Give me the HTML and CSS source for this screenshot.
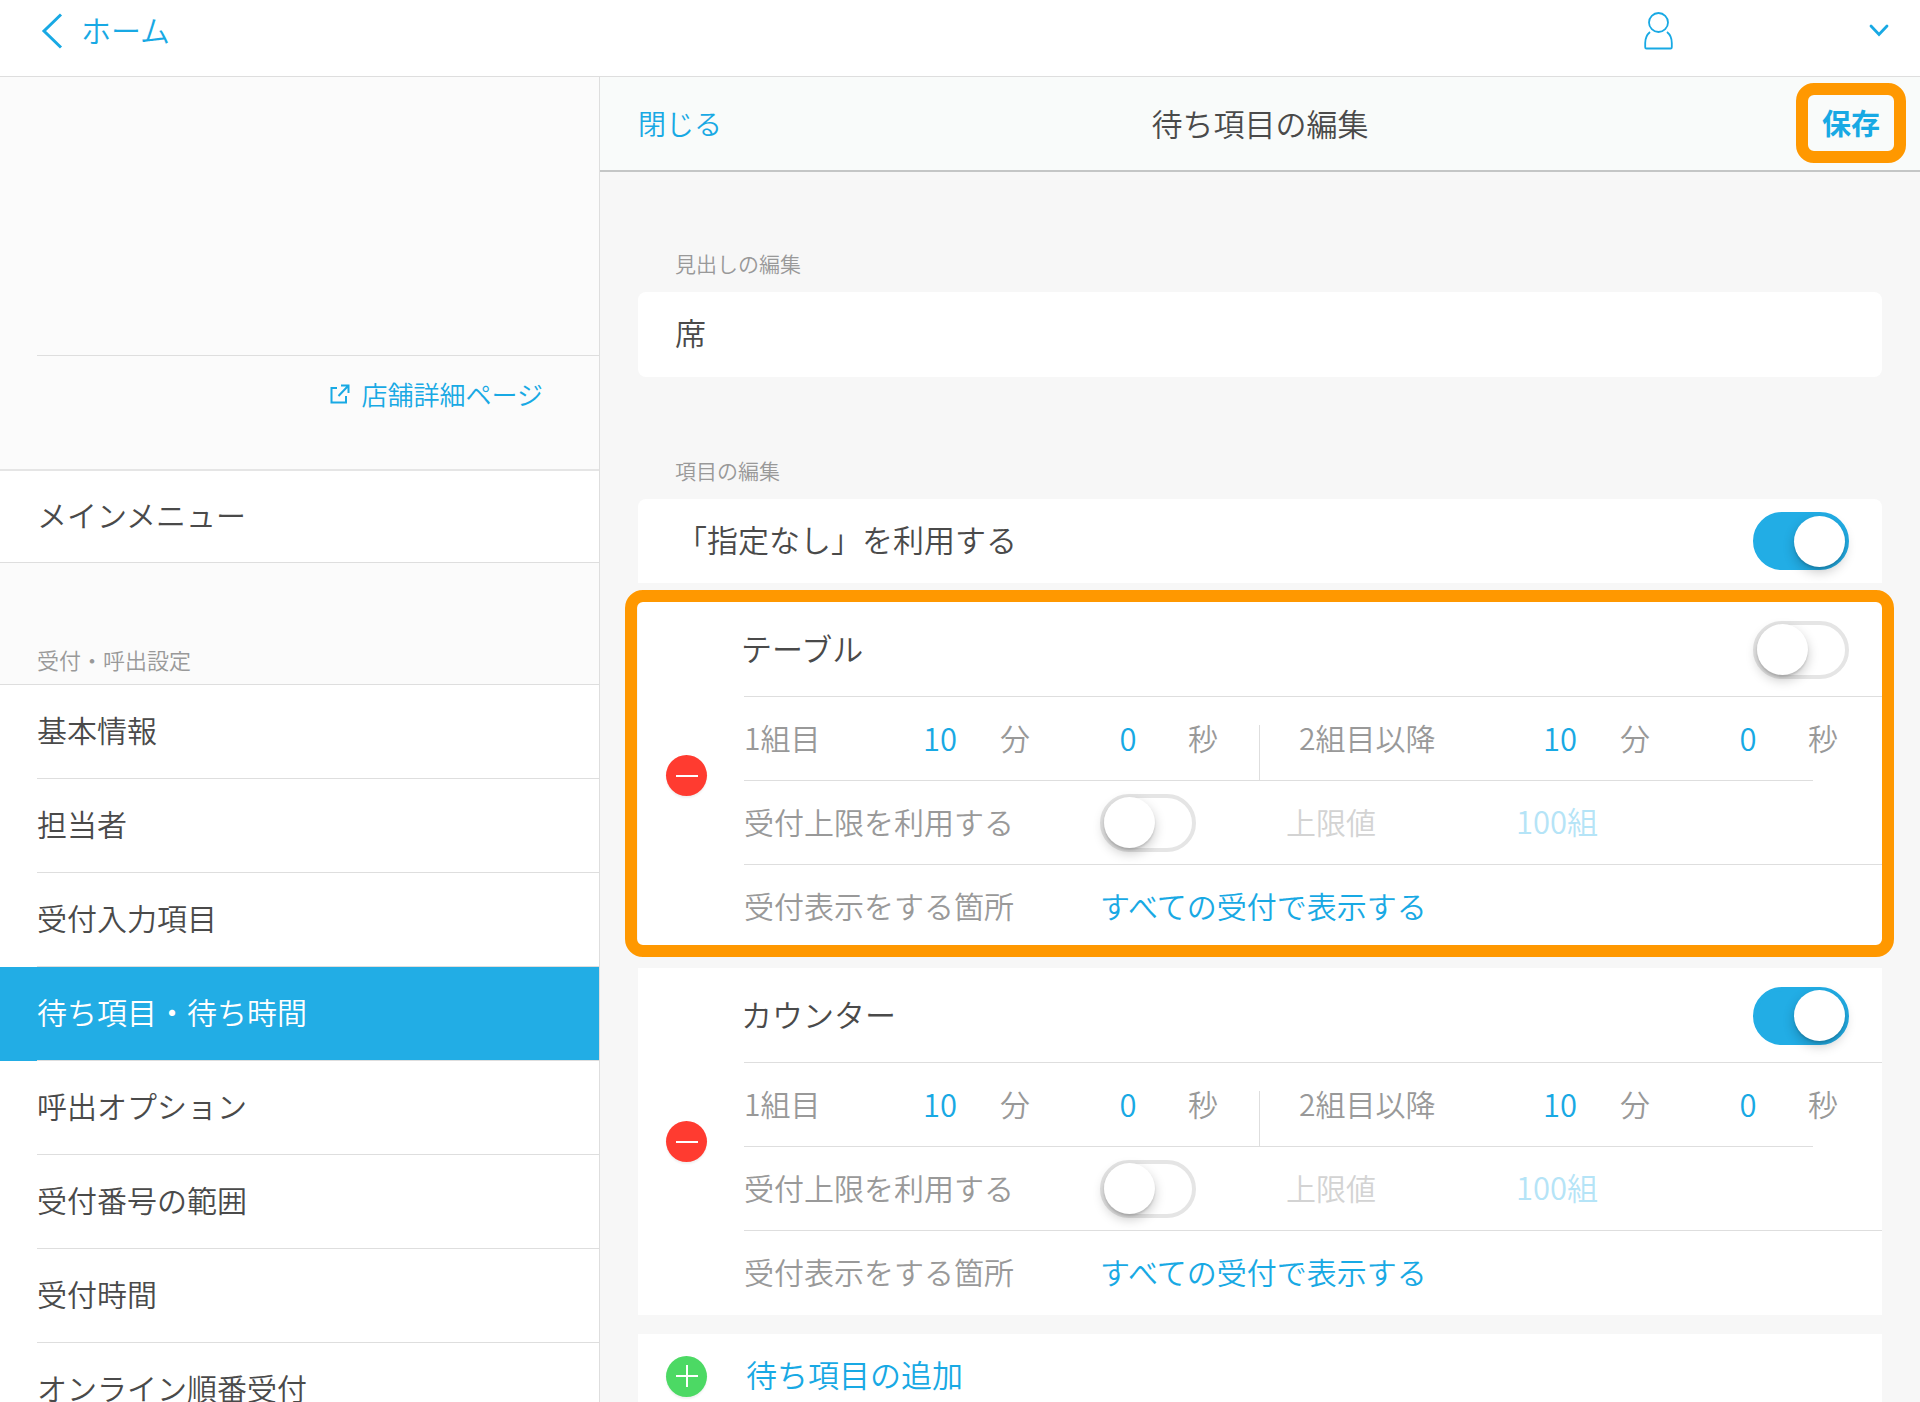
FILE: index.html
```html
<!DOCTYPE html>
<html lang="ja">
<head>
    <meta charset="UTF-8">
    <meta name="viewport" content="width=device-width, initial-scale=1.0">
    <title>待ち項目の編集</title>
    <link rel="stylesheet" href="styles.css">
</head>
<body>
    <header class="topbar">
        <a href="#" class="home">
            <svg width="22" height="36" viewBox="0 0 22 36" fill="none" stroke="currentColor" stroke-width="3"><path d="M20 1.500L3 18l17 16.500"/></svg>
            <span>ホーム</span>
        </a>
        <button type="button" class="account" aria-label="アカウント">
            <svg width="30" height="38" viewBox="0 0 30 38" fill="none" stroke="currentColor" stroke-width="1.800"><circle cx="14.500" cy="10.500" r="9.500"/><path d="M6 20C2.500 23 1.200 27 1.200 31v4.200q0 1.300 1.300 1.300h24q1.300 0 1.300-1.300V31c0-4-1-8-4.800-11"/></svg>
            <svg width="20" height="13" viewBox="0 0 20 13" fill="none" stroke="currentColor" stroke-width="2.800" stroke-linecap="round"><path d="M2 2l8 8.500L18 2"/></svg>
        </button>
    </header>

    <div class="layout">
        <aside class="sidebar">
            <div class="shop"></div>
            <div class="shop-link">
                <a href="#">
                    <svg width="20" height="20" viewBox="0 0 20 20" fill="none" stroke="currentColor" stroke-width="2"><path d="M7 4H1.500v14.500H16V12M11 1.500h7.500V9M18 2L8.500 12"/></svg>
                    <span>店舗詳細ページ</span>
                </a>
            </div>
            <a href="#" class="main-menu">メインメニュー</a>
            <h2 class="menu-heading">受付・呼出設定</h2>
            <nav class="menu">
                <a href="#" class="menu-item"><span>基本情報</span></a>
                <a href="#" class="menu-item"><span>担当者</span></a>
                <a href="#" class="menu-item"><span>受付入力項目</span></a>
                <a href="#" class="menu-item active" aria-current="page"><span>待ち項目・待ち時間</span></a>
                <a href="#" class="menu-item"><span>呼出オプション</span></a>
                <a href="#" class="menu-item"><span>受付番号の範囲</span></a>
                <a href="#" class="menu-item"><span>受付時間</span></a>
                <a href="#" class="menu-item"><span>オンライン順番受付</span></a>
            </nav>
        </aside>

        <main class="editor">
            <div class="editor-header">
                <button type="button" class="close">閉じる</button>
                <h1>待ち項目の編集</h1>
                <button type="button" class="save highlight">保存</button>
            </div>

            <form class="editor-body">
                <label class="section-label" for="heading">見出しの編集</label>
                <input type="text" id="heading" class="heading-input" value="席">

                <h2 class="section-label">項目の編集</h2>
                <div class="cards">
                    <div class="card card-first">
                        <label for="no-preference">「指定なし」を利用する</label>
                        <input type="checkbox" role="switch" class="toggle" id="no-preference" checked>
                    </div>

                    <section class="card item highlight">
                        <button type="button" class="round remove" aria-label="テーブルを削除">
                            <svg width="22" height="22" viewBox="0 0 22 22" stroke="#fff" stroke-width="2"><path d="M0 11h22"/></svg>
                        </button>
                        <div class="item-body">
                            <div class="item-title">
                                <label for="table-on">テーブル</label>
                                <input type="checkbox" role="switch" class="toggle" id="table-on">
                            </div>
                            <div class="row times">
                                <div class="time">
                                    <span class="time-label">1組目</span>
                                    <input type="text" inputmode="numeric" id="t-min1" value="10"><label for="t-min1">分</label>
                                    <input type="text" inputmode="numeric" id="t-sec1" value="0"><label for="t-sec1">秒</label>
                                </div>
                                <div class="time">
                                    <span class="time-label">2組目以降</span>
                                    <input type="text" inputmode="numeric" id="t-min2" value="10"><label for="t-min2">分</label>
                                    <input type="text" inputmode="numeric" id="t-sec2" value="0"><label for="t-sec2">秒</label>
                                </div>
                            </div>
                            <div class="row limit">
                                <label for="t-limit">受付上限を利用する</label>
                                <input type="checkbox" role="switch" class="toggle" id="t-limit">
                                <span class="limit-label">上限値</span>
                                <button type="button" class="value" disabled>100組</button>
                            </div>
                            <div class="row place">
                                <span>受付表示をする箇所</span>
                                <button type="button" class="value">すべての受付で表示する</button>
                            </div>
                        </div>
                    </section>

                    <section class="card item">
                        <button type="button" class="round remove" aria-label="カウンターを削除">
                            <svg width="22" height="22" viewBox="0 0 22 22" stroke="#fff" stroke-width="2"><path d="M0 11h22"/></svg>
                        </button>
                        <div class="item-body">
                            <div class="item-title">
                                <label for="counter-on">カウンター</label>
                                <input type="checkbox" role="switch" class="toggle" id="counter-on" checked>
                            </div>
                            <div class="row times">
                                <div class="time">
                                    <span class="time-label">1組目</span>
                                    <input type="text" inputmode="numeric" id="c-min1" value="10"><label for="c-min1">分</label>
                                    <input type="text" inputmode="numeric" id="c-sec1" value="0"><label for="c-sec1">秒</label>
                                </div>
                                <div class="time">
                                    <span class="time-label">2組目以降</span>
                                    <input type="text" inputmode="numeric" id="c-min2" value="10"><label for="c-min2">分</label>
                                    <input type="text" inputmode="numeric" id="c-sec2" value="0"><label for="c-sec2">秒</label>
                                </div>
                            </div>
                            <div class="row limit">
                                <label for="c-limit">受付上限を利用する</label>
                                <input type="checkbox" role="switch" class="toggle" id="c-limit">
                                <span class="limit-label">上限値</span>
                                <button type="button" class="value" disabled>100組</button>
                            </div>
                            <div class="row place">
                                <span>受付表示をする箇所</span>
                                <button type="button" class="value">すべての受付で表示する</button>
                            </div>
                        </div>
                    </section>

                    <button type="button" class="card add">
                        <span class="round plus">
                            <svg width="22" height="22" viewBox="0 0 22 22" stroke="#fff" stroke-width="2"><path d="M0 11h22M11 0v22"/></svg>
                        </span>
                        <span class="add-text">待ち項目の追加</span>
                    </button>
                </div>
            </form>
        </main>
    </div>
</body>
</html>
```
FILE: styles.css
```css
* {
    box-sizing: border-box;
}
html, body {
    height: 100%;
    margin: 0;
}
body {
    display: flex;
    flex-direction: column;
    overflow: hidden;
    font-family: "Noto Sans CJK JP", sans-serif;
    font-size: 30px;
    font-weight: 350;
    line-height: 40px;
    color: #4a4a4a;
    background: #f7f7f7;
}
a {
    color: inherit;
    text-decoration: none;
}
button, input {
    margin: 0;
    padding: 0;
    border: none;
    background: none;
    font: inherit;
    color: #18a9e4;
}
button {
    cursor: pointer;
}
h1, h2 {
    margin: 0;
    font-weight: 350;
}
svg {
    display: block;
    flex: none;
}

/* Orange frame around the parts to look at */
.highlight {
    position: relative;
}
.highlight::after {
    content: '';
    position: absolute;
    inset: -12px;
    border: 12px solid #ff9800;
    border-radius: 18px;
    pointer-events: none;
}

/* Top bar */
.topbar {
    flex: none;
    display: flex;
    justify-content: space-between;
    align-items: center;
    height: 77px;
    padding: 0 31px 15px 41px;
    border-bottom: 1px solid #dedede;
    background: #fff;
    color: #18a9e4;
}
.home {
    display: flex;
    align-items: center;
    gap: 18px;
}
.home span {
    padding-bottom: 4px;
}
.account {
    display: flex;
    align-items: center;
    justify-content: space-between;
    width: 245px;
}

.layout {
    flex: 1;
    display: flex;
    min-height: 0;
}

/* Sidebar */
.sidebar {
    flex: none;
    width: 600px;
    border-right: 1px solid #dedede;
    background: #fbfbfb;
    overflow-y: auto;
    scrollbar-width: none;
}
.shop {
    height: 279px;
    margin-left: 37px;
    border-bottom: 1px solid #dedede;
}
.shop-link {
    display: flex;
    justify-content: flex-end;
    height: 115px;
    padding: 18px 56px 0 0;
    border-bottom: 2px solid #e5e5e5;
    font-size: 26px;
    color: #18a9e4;
}
.shop-link a {
    display: flex;
    align-items: center;
    gap: 12px;
    height: 40px;
}
.main-menu {
    display: flex;
    align-items: center;
    height: 92px;
    padding: 0 0 5px 37px;
    border-bottom: 1px solid #dedede;
    background: #fff;
}
.menu-heading {
    height: 122px;
    padding: 76px 0 0 37px;
    border-bottom: 1px solid #dedede;
    font-size: 22px;
    color: #999;
}
.menu-item {
    display: flex;
    height: 94px;
    padding-left: 37px;
    background: #fff;
}
.menu-item span {
    flex: 1;
    display: flex;
    align-items: center;
    padding-bottom: 5px;
    border-bottom: 1px solid #dedede;
}
.menu-item.active {
    background: #22ade5;
    color: #fff;
}

/* Editor */
.editor {
    flex: 1;
    display: flex;
    flex-direction: column;
    min-width: 0;
}
.editor-header {
    flex: none;
    display: grid;
    grid-template-columns: 1fr auto 1fr;
    align-items: center;
    height: 95px;
    padding: 0 26px 2px 38px;
    border-bottom: 2px solid #c4c6c6;
    background: #f9fbfa;
}
.editor-header h1 {
    font-size: 31px;
    /* side paddings differ by 12px */
    padding-right: 12px;
}
.close {
    justify-self: start;
    font-size: 28px;
}
.save {
    justify-self: end;
    width: 86px;
    height: 56px;
    padding-bottom: 2px;
    font-size: 29px;
    font-weight: 700;
}
.editor-body {
    flex: 1;
    min-height: 0;
    padding: 71px 38px 38px;
    overflow-y: auto;
    scrollbar-width: none;
}
.section-label {
    display: block;
    padding: 0 37px 9px;
    font-size: 21px;
    color: #999;
}
.heading-input {
    display: block;
    width: 100%;
    height: 85px;
    margin-bottom: 73px;
    padding: 0 37px 6px;
    border-radius: 8px;
    background: #fff;
    font-size: 31px;
    color: #4a4a4a;
}
.cards {
    display: flex;
    flex-direction: column;
    gap: 19px;
    font-size: 31px;
}
.card {
    background: #fff;
}
.card-first {
    display: flex;
    align-items: center;
    justify-content: space-between;
    height: 84px;
    padding: 0 33px 0 38px;
    border-radius: 8px 8px 0 0;
}
.item {
    display: flex;
    align-items: center;
}
.item.highlight::after {
    bottom: -8px;
    left: -13px;
}
.card label, .row span, .value {
    padding-bottom: 4px;
}
.round {
    flex: none;
    display: flex;
    align-items: center;
    justify-content: center;
    width: 41px;
    height: 41px;
    border-radius: 50%;
    box-shadow: 0 2px 2px rgba(0, 0, 0, 0.06);
}
.remove {
    margin: 0 37px 0 28px;
    background: #ff3b30;
}
.plus {
    background: #4cd964;
}
.item-body {
    flex: 1;
    min-width: 0;
}
.item-title {
    display: flex;
    align-items: center;
    justify-content: space-between;
    height: 95px;
    margin-left: -3px;
    padding: 0 33px 0 0;
    background: linear-gradient(#dedede, #dedede) right bottom / calc(100% - 3px) 1px no-repeat;
}
.row {
    height: 84px;
    font-size: 30px;
    color: #999;
}
.times {
    display: grid;
    grid-template-columns: 516fr 622fr;
    align-items: end;
    /* the line stops short of the right edge */
    background: linear-gradient(#dedede, #dedede) left bottom / calc(100% - 69px) 1px no-repeat;
}
.time {
    display: flex;
    align-items: center;
    height: 56px;
    padding: 0 41px 28px 0;
}
.time:first-child {
    border-right: 1px solid #dedede;
}
.time:last-child {
    padding: 0 44px 28px 39px;
}
.time-label {
    flex: 1;
    white-space: nowrap;
}
.time input {
    width: 80px;
    height: 44px;
    padding-bottom: 4px;
    font-size: 31px;
    text-align: center;
}
.time label {
    margin-left: 20px;
}
.time label + input {
    margin-left: 58px;
}
.limit {
    display: grid;
    grid-template-columns: 356px 186px 230px auto;
    align-items: center;
    justify-content: start;
    border-bottom: 1px solid #dedede;
}
.row .limit-label {
    color: #d3d3d3;
}
.place {
    display: grid;
    grid-template-columns: 356px auto;
    align-items: center;
    justify-content: start;
}
.value:disabled {
    font-size: 31px;
    color: #b5e4f7;
    cursor: default;
}
.add {
    display: flex;
    align-items: center;
    gap: 39px;
    height: 84px;
    padding-left: 28px;
}
.add-text {
    padding-bottom: 4px;
}

/* Toggle switch */
.toggle {
    appearance: none;
    flex: none;
    display: flex;
    align-items: center;
    width: 96px;
    height: 58px;
    padding: 0;
    border: 4px solid #e5e5e5;
    border-radius: 29px;
    background: #fff;
    cursor: pointer;
}
.toggle::before {
    content: '';
    width: 51px;
    height: 51px;
    border-radius: 50%;
    background: #fff;
    box-shadow: 0 5px 12px rgba(0, 0, 0, 0.22), 0 2px 2px rgba(0, 0, 0, 0.12);
}
.toggle:checked {
    justify-content: flex-end;
    border-color: #22ade5;
    background: #22ade5;
}
```
